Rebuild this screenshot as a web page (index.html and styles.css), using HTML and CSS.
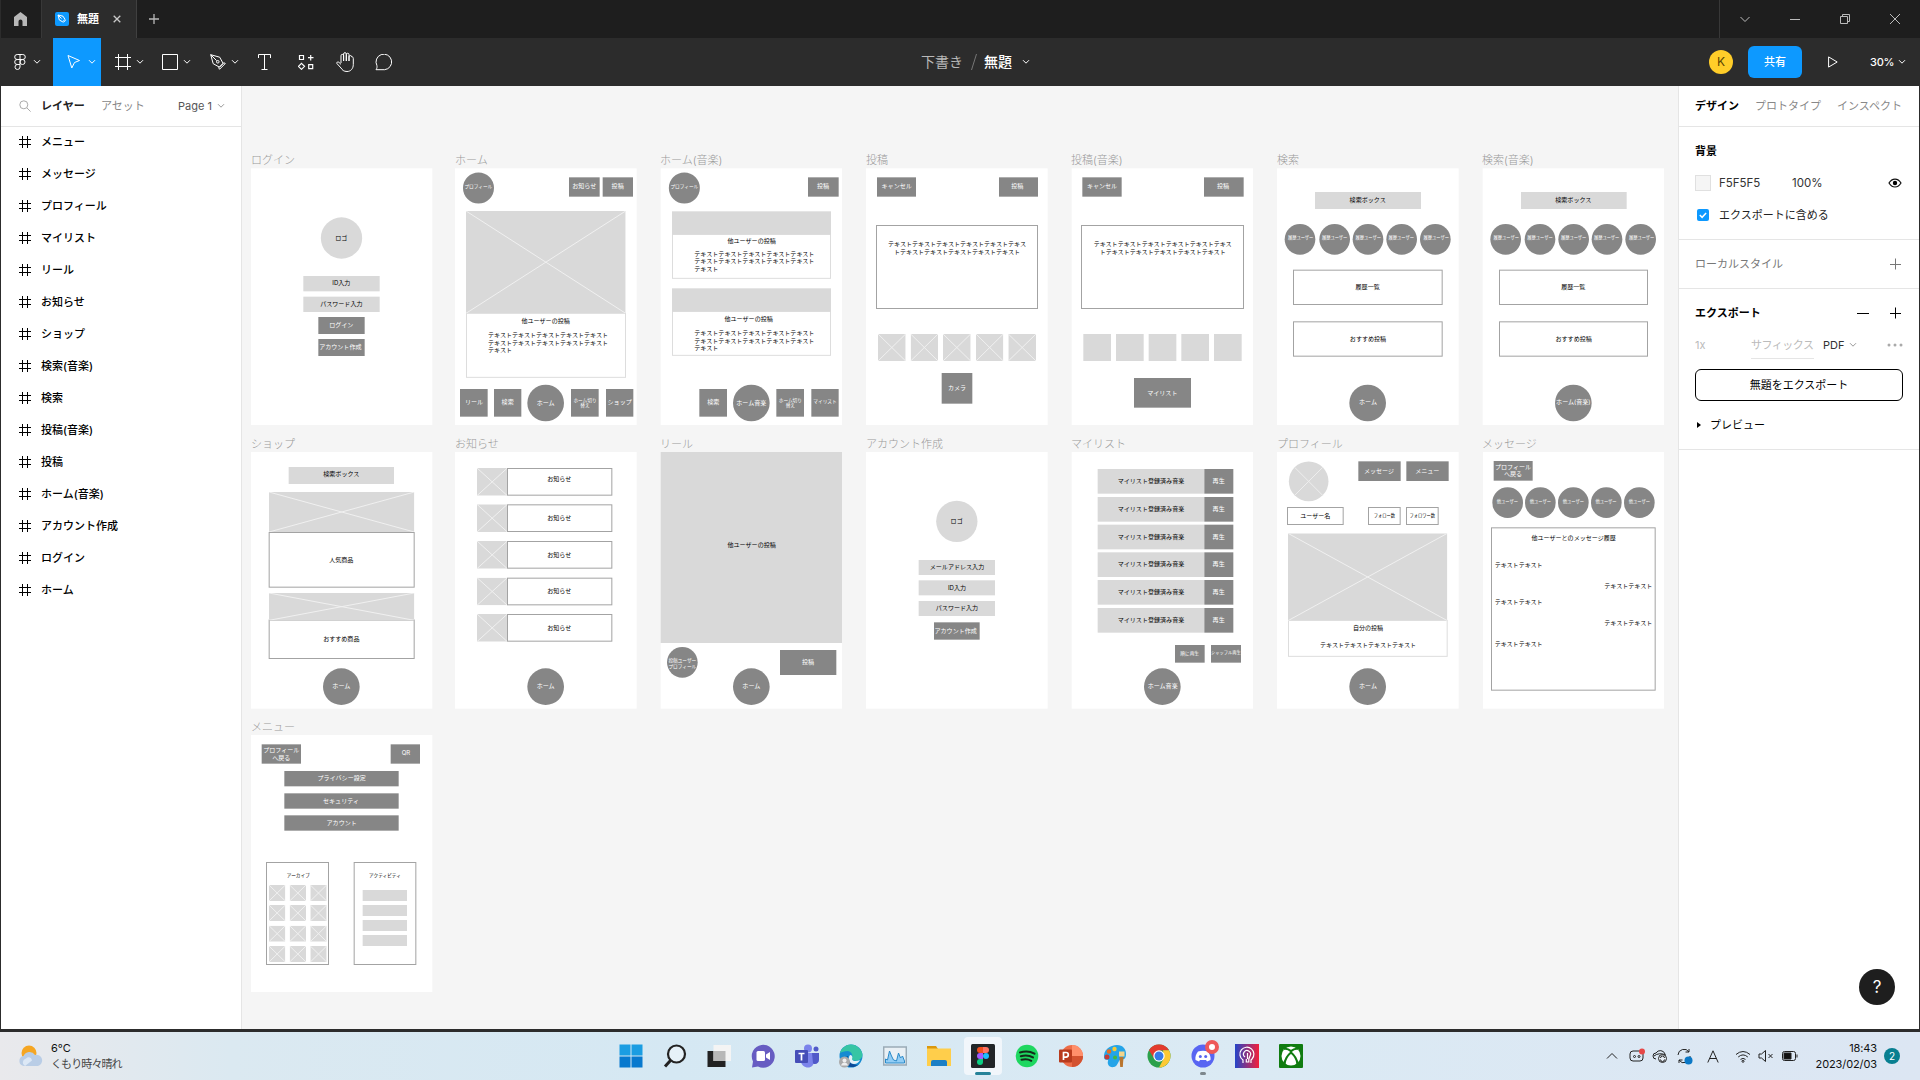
FILE: index.html
```html
<!DOCTYPE html>
<html lang="ja">
<head>
<meta charset="utf-8">
<title>無題</title>
<link rel="stylesheet" href="styles.css">
</head>
<body>
<svg class="defs" width="0" height="0">
  <symbol id="ph" viewBox="0 0 100 100" preserveAspectRatio="none"><rect class="l" width="100" height="100"/><path class="cross" d="M0 0L100 100M100 0L0 100"/></symbol>
  <symbol id="caret" viewBox="0 0 8 6"><path d="M1 1.200l3 3 3-3" fill="none" stroke="currentColor"/></symbol>
  <symbol id="hash" viewBox="0 0 12 12"><path d="M3.500 0v12M8.500 0v12M0 3.500h12M0 8.500h12" fill="none" stroke="currentColor"/></symbol>
  <symbol id="plus" viewBox="0 0 12 12"><path d="M6.500 .5v11M1 6.500h11" fill="none" stroke="currentColor"/></symbol>
</svg>

<header class="tabbar">
  <div class="home"><svg width="13" height="14" viewBox="0 0 13 14"><path d="M6.500 0L13 5v9H8.500V9.500a2 2 0 0 0-4 0V14H0V5z" fill="#b8b8b8"/></svg></div>
  <div class="tab">
    <svg width="14" height="14" viewBox="0 0 14 14"><rect width="14" height="14" rx="2" fill="#0d99ff"/><path d="M3 3l5 1.200 2 3.200-2.400 2.400L4.300 8zM3 3l3.500 3.500M8.300 10.500l2.300-2.300" fill="none" stroke="#fff"/></svg>
    <b>無題</b>
    <svg width="8" height="8" viewBox="0 0 8 8"><path d="M.7.7l6.600 6.600M7.300.7L.7 7.300" stroke="#c8c8c8" stroke-width="1.300"/></svg>
  </div>
  <svg class="newtab" width="10" height="10" viewBox="0 0 10 10"><path d="M5 0v10M0 5h10" stroke="#b8b8b8" stroke-width="1.300"/></svg>
  <div class="winctl">
    <svg width="10" height="10" viewBox="0 0 10 10"><path d="M.5 3L5 7.500 9.500 3"/></svg>
    <svg width="10" height="10" viewBox="0 0 10 10"><path d="M0 5.500h10"/></svg>
    <svg width="10" height="10" viewBox="0 0 10 10"><path d="M.5 2.500h7v7h-7zM2.500 2.500v-2h7v7h-2"/></svg>
    <svg width="10" height="10" viewBox="0 0 10 10"><path d="M0 0l10 10M10 0L0 10"/></svg>
  </div>
</header>

<nav class="toolbar">
  <div class="tools">
    <span class="tool t-menu"><svg width="12" height="16" viewBox="0 0 12 16"><path d="M6 .5H3.200a2.500 2.500 0 0 0 0 5H6zM6 .5h2.800a2.500 2.500 0 0 1 0 5H6M6 5.500H3.200a2.500 2.500 0 0 0 0 5H6zM6 10.500H3.200A2.500 2.500 0 1 0 6 13zM8.600 5.500a2.500 2.500 0 1 1-2.600 2.500 2.500 2.500 0 0 1 2.600-2.500z"/></svg><svg class="car" width="8" height="6"><use href="#caret"/></svg></span>
    <span class="tool t-move on"><svg width="14" height="16" viewBox="0 0 14 16"><path d="M1 1.500l11.500 5-5 2L4.800 14z"/></svg><svg class="car" width="8" height="6"><use href="#caret"/></svg></span>
    <span class="tool"><svg width="16" height="16" viewBox="0 0 16 16"><path d="M3.500 0v16M12.500 0v16M0 3.500h16M0 12.500h16"/></svg><svg class="car" width="8" height="6"><use href="#caret"/></svg></span>
    <span class="tool"><svg width="16" height="16" viewBox="0 0 16 16"><path d="M.5.5h15v15H.5z"/></svg><svg class="car" width="8" height="6"><use href="#caret"/></svg></span>
    <span class="tool"><svg width="16" height="16" viewBox="0 0 16 16"><path d="M.7.7l9 2.500 3.500 6.300-3.700 3.700-6.300-3.500zM.7.7l6 6M9.500 15.300l5.800-5.800-1.600-.8-5 5z"/><circle cx="7.800" cy="7.800" r="1.300"/></svg><svg class="car" width="8" height="6"><use href="#caret"/></svg></span>
    <span class="tool one"><svg width="13" height="16" viewBox="0 0 13 16"><path d="M.5 4V.5h12V4M6.500.5v15M3.500 15.500h6"/></svg></span>
    <span class="tool one"><svg width="16" height="16" viewBox="0 0 16 16"><path d="M1.500 1.500h4v4h-4zM10.700 10.700h4v4h-4zM12.700 1v5.500M10 3.700h5.500M3.500 9.300l3 3-3 3-3-3z" stroke-width="1.200"/></svg></span>
    <span class="tool one hand"><svg width="18" height="20" viewBox="0 0 18 20"><path d="M5 11V3.700a1.300 1.300 0 0 1 2.600 0V9M7.600 9V2a1.300 1.300 0 0 1 2.700 0v7M10.300 9V2.600a1.300 1.300 0 0 1 2.700 0V9M13 9V5a1.300 1.300 0 0 1 2.700-.2c1.200 0 1.600.7 1.600 1.700v6c0 4-2.500 7-6.300 7-3.300 0-4.700-1.400-6-3.500L.9 11.500c-.6-1.100.9-2.200 2-1.200L5 12.400"/></svg></span>
    <span class="tool one"><svg width="18" height="17" viewBox="0 0 18 17"><path d="M1 15.700c1-1.400 1.200-2.600.9-4.200A7.800 7.800 0 1 1 9.600 15.700z"/></svg></span>
  </div>
  <div class="crumb"><span>下書き</span><svg width="6" height="16" viewBox="0 0 6 16"><path d="M5.500 0l-5 16" stroke="#777"/></svg><strong>無題</strong><svg width="8" height="6"><use href="#caret"/></svg></div>
  <div class="actions"><span class="avatar">K</span><span class="share">共有</span><svg class="play" width="10" height="12" viewBox="0 0 10 12"><path d="M.6.900v10.200L9.200 6z" fill="none" stroke="#fff"/></svg><span class="zoom">30%</span><svg width="8" height="6"><use href="#caret"/></svg></div>
</nav>

<main class="work">
  <aside class="layers">
    <div class="lhead"><svg width="12" height="12" viewBox="0 0 12 12"><circle cx="4.800" cy="4.800" r="4" fill="none" stroke="#aaa"/><path d="M7.800 7.800l3.800 3.800" stroke="#aaa"/></svg><b>レイヤー</b><span>アセット</span><em>Page 1</em><svg class="pcar" width="8" height="6"><use href="#caret"/></svg></div>
    <ul>
      <li><svg><use href="#hash"/></svg>メニュー</li>
      <li><svg><use href="#hash"/></svg>メッセージ</li>
      <li><svg><use href="#hash"/></svg>プロフィール</li>
      <li><svg><use href="#hash"/></svg>マイリスト</li>
      <li><svg><use href="#hash"/></svg>リール</li>
      <li><svg><use href="#hash"/></svg>お知らせ</li>
      <li><svg><use href="#hash"/></svg>ショップ</li>
      <li><svg><use href="#hash"/></svg>検索(音楽)</li>
      <li><svg><use href="#hash"/></svg>検索</li>
      <li><svg><use href="#hash"/></svg>投稿(音楽)</li>
      <li><svg><use href="#hash"/></svg>投稿</li>
      <li><svg><use href="#hash"/></svg>ホーム(音楽)</li>
      <li><svg><use href="#hash"/></svg>アカウント作成</li>
      <li><svg><use href="#hash"/></svg>ログイン</li>
      <li><svg><use href="#hash"/></svg>ホーム</li>
    </ul>
  </aside>

  <section class="canvas">
    <article class="board c1 r1"><h2>ログイン</h2>
      <svg viewBox="33 69 546 774"><rect class="w" x="33" y="70" width="544" height="770"/>
        <circle class="l" cx="304.500" cy="279" r="62"/><text x="304" y="279">ロゴ</text>
        <rect class="l" x="190" y="393" width="229" height="46"/><text x="304" y="416">ID入力</text>
        <rect class="l" x="190" y="455" width="229" height="46"/><text x="304" y="478">パスワード入力</text>
        <rect class="d" x="235" y="516" width="139" height="51"/><text class="t" x="304" y="542">ログイン</text>
        <rect class="d" x="235" y="582" width="139" height="51"/><text class="t" x="301" y="608">アカウント作成</text>
      </svg></article>

    <article class="board c2 r1"><h2>ホーム</h2>
      <svg viewBox="645 69 546 774"><rect class="w" x="645" y="70" width="545" height="770"/>
        <circle class="d" cx="715.500" cy="129" r="46.500"/><text class="t s14" x="715" y="125">プロフィール</text>
        <rect class="d" x="987" y="97" width="92" height="58"/><text class="t" x="1033" y="125">お知らせ</text>
        <rect class="d" x="1088" y="97" width="91" height="58"/><text class="t" x="1133" y="125">投稿</text>
        <rect class="f" x="679.500" y="505" width="477" height="192"/>
        <use href="#ph" x="678" y="198" width="479" height="307"/>
        <text x="917" y="528">他ユーザーの投稿</text>
        <text class="st" x="744" y="572">テキストテキストテキストテキストテキスト</text><text class="st" x="744" y="594">テキストテキストテキストテキストテキスト</text><text class="st" x="744" y="616">テキスト</text>
        <rect class="d" x="660" y="732" width="83" height="83"/><text class="t" x="702" y="772">リール</text>
        <rect class="d" x="762" y="732" width="82" height="83"/><text class="t" x="803" y="772">検索</text>
        <circle class="d" cx="917" cy="774" r="55"/><text class="t" x="917" y="774">ホーム</text>
        <rect class="d" x="993" y="732" width="83" height="83"/><text class="t s14" x="1035" y="766">ホーム切り</text><text class="t s14" x="1035" y="783">替え</text>
        <rect class="d" x="1098" y="732" width="82" height="83"/><text class="t" x="1139" y="772">ショップ</text>
      </svg></article>

    <article class="board c3 r1"><h2>ホーム(音楽)</h2>
      <svg viewBox="30 69 546 774"><rect class="w" x="32" y="70" width="544" height="770"/>
        <circle class="d" cx="103" cy="129" r="46.500"/><text class="t s14" x="103" y="125">プロフィール</text>
        <rect class="d" x="474" y="97" width="92" height="58"/><text class="t" x="519" y="125">投稿</text>
        <rect class="f" x="67.500" y="268" width="474" height="132"/><rect class="l" x="66" y="199" width="477" height="70"/>
        <text x="305" y="290">他ユーザーの投稿</text>
        <text class="st" x="133" y="328">テキストテキストテキストテキストテキスト</text><text class="st" x="133" y="350">テキストテキストテキストテキストテキスト</text><text class="st" x="133" y="372">テキスト</text>
        <rect class="f" x="67.500" y="499" width="474" height="132"/><rect class="l" x="66" y="430" width="477" height="70"/>
        <text x="296" y="522">他ユーザーの投稿</text>
        <text class="st" x="133" y="566">テキストテキストテキストテキストテキスト</text><text class="st" x="133" y="588">テキストテキストテキストテキストテキスト</text><text class="st" x="133" y="610">テキスト</text>
        <rect class="d" x="148" y="732" width="83" height="83"/><text class="t" x="190" y="772">検索</text>
        <circle class="d" cx="304" cy="774" r="55"/><text class="t" x="304" y="774">ホーム音楽</text>
        <rect class="d" x="379" y="732" width="83" height="83"/><text class="t s14" x="421" y="766">ホーム切り</text><text class="t s14" x="421" y="783">替え</text>
        <rect class="d" x="484" y="732" width="82" height="83"/><text class="t s14" x="525" y="771">マイリスト</text>
      </svg></article>

    <article class="board c4 r1"><h2>投稿</h2>
      <svg viewBox="648 69 546 774"><rect class="w" x="648" y="70" width="545" height="770"/>
        <rect class="d" x="681" y="97" width="117" height="58"/><text class="t" x="740" y="125">キャンセル</text>
        <rect class="d" x="1047" y="97" width="117" height="58"/><text class="t" x="1102" y="125">投稿</text>
        <rect class="o" x="679.500" y="241.500" width="483" height="249"/>
        <text x="921" y="299">テキストテキストテキストテキストテキストテキス</text><text x="921" y="321">トテキストテキストテキストテキストテキスト</text>
        <use href="#ph" x="684" y="567" width="83" height="81"/><use href="#ph" x="782" y="567" width="82" height="81"/><use href="#ph" x="879" y="567" width="83" height="81"/><use href="#ph" x="978" y="567" width="82" height="81"/><use href="#ph" x="1075" y="567" width="83" height="81"/>
        <rect class="d" x="875" y="684" width="92" height="92"/><text class="t" x="921" y="731">カメラ</text>
      </svg></article>

    <article class="board c5 r1"><h2>投稿(音楽)</h2>
      <svg viewBox="33 69 546 774"><rect class="w" x="35" y="70" width="544" height="770"/>
        <rect class="d" x="67" y="97" width="118" height="58"/><text class="t" x="126" y="125">キャンセル</text>
        <rect class="d" x="432" y="97" width="119" height="58"/><text class="t" x="489" y="125">投稿</text>
        <rect class="o" x="64.500" y="241.500" width="486" height="249"/>
        <text x="308" y="299">テキストテキストテキストテキストテキストテキス</text><text x="308" y="321">トテキストテキストテキストテキストテキスト</text>
        <rect class="l" x="70" y="567" width="83" height="81"/><rect class="l" x="168" y="567" width="83" height="81"/><rect class="l" x="266" y="567" width="83" height="81"/><rect class="l" x="364" y="567" width="83" height="81"/><rect class="l" x="462" y="567" width="83" height="81"/>
        <rect class="d" x="222" y="699" width="171" height="89"/><text class="t" x="307" y="744">マイリスト</text>
      </svg></article>

    <article class="board c6 r1"><h2>検索</h2>
      <svg viewBox="651 69 546 774"><rect class="w" x="651" y="70" width="545" height="770"/>
        <rect class="l" x="765" y="141" width="318" height="51"/><text x="923" y="167">検索ボックス</text>
        <circle class="d" cx="720" cy="283" r="46"/><circle class="d" cx="824" cy="283" r="46"/><circle class="d" cx="924" cy="283" r="46"/><circle class="d" cx="1025" cy="283" r="46"/><circle class="d" cx="1126" cy="283" r="46"/>
        <text class="t s13" x="722" y="279">履歴ユーザー</text><text class="t s13" x="824" y="279">履歴ユーザー</text><text class="t s13" x="925" y="279">履歴ユーザー</text><text class="t s13" x="1024" y="279">履歴ユーザー</text><text class="t s13" x="1129" y="279">履歴ユーザー</text>
        <rect class="o" x="700.500" y="375.500" width="446" height="103"/><text x="923" y="428">履歴一覧</text>
        <rect class="o" x="700.500" y="530.500" width="446" height="103"/><text x="924" y="583">おすすめ投稿</text>
        <circle class="d" cx="923" cy="774" r="55"/><text class="t" x="924" y="771">ホーム</text>
      </svg></article>

    <article class="board c7 r1"><h2>検索(音楽)</h2>
      <svg viewBox="66 69 546 774"><rect class="w" x="68" y="70" width="544" height="770"/>
        <rect class="l" x="183" y="141" width="317" height="51"/><text x="340" y="167">検索ボックス</text>
        <circle class="d" cx="137" cy="283" r="46"/><circle class="d" cx="240" cy="283" r="46"/><circle class="d" cx="341" cy="283" r="46"/><circle class="d" cx="441" cy="283" r="46"/><circle class="d" cx="542" cy="283" r="46"/>
        <text class="t s13" x="139" y="279">履歴ユーザー</text><text class="t s13" x="240" y="279">履歴ユーザー</text><text class="t s13" x="341" y="279">履歴ユーザー</text><text class="t s13" x="440" y="279">履歴ユーザー</text><text class="t s13" x="545" y="279">履歴ユーザー</text>
        <rect class="o" x="118.500" y="375.500" width="444" height="103"/><text x="340" y="428">履歴一覧</text>
        <rect class="o" x="118.500" y="530.500" width="444" height="103"/><text x="341" y="583">おすすめ投稿</text>
        <circle class="d" cx="340" cy="774" r="55"/><text class="t" x="340" y="771">ホーム(音楽)</text>
      </svg></article>

    <article class="board c1 r2"><h2>ショップ</h2>
      <svg viewBox="33 66 546 774"><rect class="w" x="33" y="66" width="544" height="770"/>
        <rect class="l" x="146" y="111" width="316" height="51"/><text x="304" y="132">検索ボックス</text>
        <rect class="o" x="87.500" y="307.500" width="435" height="164"/><use href="#ph" x="87" y="186" width="436" height="120"/><text x="304" y="390">人気商品</text>
        <rect class="o" x="87.500" y="570" width="435" height="115.500"/><use href="#ph" x="87" y="489" width="436" height="82"/><text x="304" y="628">おすすめ商品</text>
        <circle class="d" cx="304" cy="770" r="55"/><text class="t" x="304" y="770">ホーム</text>
      </svg></article>

    <article class="board c2 r2"><h2>お知らせ</h2>
      <svg viewBox="645 66 546 774"><rect class="w" x="645" y="66" width="545" height="770"/>
        <use href="#ph" x="711" y="114" width="91" height="83"/><rect class="o" x="802.500" y="115.500" width="313" height="80"/><text x="958" y="149">お知らせ</text>
        <use href="#ph" x="711" y="223" width="91" height="83"/><rect class="o" x="802.500" y="224.500" width="313" height="80"/><text x="958" y="265">お知らせ</text>
        <use href="#ph" x="711" y="333" width="91" height="83"/><rect class="o" x="802.500" y="334.500" width="313" height="80"/><text x="958" y="375">お知らせ</text>
        <use href="#ph" x="711" y="443" width="91" height="83"/><rect class="o" x="802.500" y="444.500" width="313" height="80"/><text x="958" y="485">お知らせ</text>
        <use href="#ph" x="711" y="552" width="91" height="83"/><rect class="o" x="802.500" y="553.500" width="313" height="80"/><text x="958" y="594">お知らせ</text>
        <circle class="d" cx="917" cy="770" r="55"/><text class="t" x="917" y="770">ホーム</text>
      </svg></article>

    <article class="board c3 r2"><h2>リール</h2>
      <svg viewBox="30 66 546 774"><rect class="w" x="32" y="66" width="544" height="770"/>
        <rect class="l" x="32" y="66" width="544" height="573"/><text x="305" y="346">他ユーザーの投稿</text>
        <circle class="d" cx="97" cy="697" r="46"/><text class="t s14" x="97" y="693">投稿ユーザー</text><text class="t s14" x="97" y="710">プロフィール</text>
        <rect class="d" x="390" y="660" width="169" height="75"/><text class="t" x="474" y="696">投稿</text>
        <circle class="d" cx="304" cy="770" r="55"/><text class="t" x="304" y="770">ホーム</text>
      </svg></article>

    <article class="board c4 r2"><h2>アカウント作成</h2>
      <svg viewBox="648 66 546 774"><rect class="w" x="648" y="66" width="545" height="770"/>
        <circle class="l" cx="920.500" cy="274" r="62"/><text x="920" y="275">ロゴ</text>
        <rect class="l" x="806" y="390" width="229" height="45"/><text x="921" y="412">メールアドレス入力</text>
        <rect class="l" x="806" y="451" width="229" height="45"/><text x="921" y="474">ID入力</text>
        <rect class="l" x="806" y="513" width="229" height="45"/><text x="921" y="535">パスワード入力</text>
        <rect class="d" x="852" y="577" width="137" height="52"/><text class="t" x="917" y="604">アカウント作成</text>
      </svg></article>

    <article class="board c5 r2"><h2>マイリスト</h2>
      <svg viewBox="33 66 546 774"><rect class="w" x="35" y="66" width="544" height="770"/>
        <rect class="l" x="113" y="117" width="320" height="74"/><rect class="d" x="433" y="117" width="87" height="74"/><text x="273" y="154">マイリスト登録済み音楽</text><text class="t" x="476" y="154">再生</text>
        <rect class="l" x="113" y="201" width="320" height="74"/><rect class="d" x="433" y="201" width="87" height="74"/><text x="273" y="238">マイリスト登録済み音楽</text><text class="t" x="476" y="238">再生</text>
        <rect class="l" x="113" y="284" width="320" height="74"/><rect class="d" x="433" y="284" width="87" height="74"/><text x="273" y="321">マイリスト登録済み音楽</text><text class="t" x="476" y="321">再生</text>
        <rect class="l" x="113" y="367" width="320" height="74"/><rect class="d" x="433" y="367" width="87" height="74"/><text x="273" y="404">マイリスト登録済み音楽</text><text class="t" x="476" y="404">再生</text>
        <rect class="l" x="113" y="450" width="320" height="74"/><rect class="d" x="433" y="450" width="87" height="74"/><text x="273" y="487">マイリスト登録済み音楽</text><text class="t" x="476" y="487">再生</text>
        <rect class="l" x="113" y="534" width="320" height="74"/><rect class="d" x="433" y="534" width="87" height="74"/><text x="273" y="571">マイリスト登録済み音楽</text><text class="t" x="476" y="571">再生</text>
        <rect class="d" x="345" y="645" width="89" height="53"/><text class="t s14" x="389" y="671">順に再生</text>
        <rect class="d" x="453" y="645" width="90" height="53"/><text class="t s13" x="498" y="671">シャッフル再生</text>
        <circle class="d" cx="307" cy="770" r="55"/><text class="t" x="308" y="770">ホーム音楽</text>
      </svg></article>

    <article class="board c6 r2"><h2>プロフィール</h2>
      <svg viewBox="651 66 546 774"><rect class="w" x="651" y="66" width="545" height="770"/>
        <circle class="l" cx="746" cy="154" r="59.500"/><path class="line" d="M704 112l84 84M788 112l-84 84"/>
        <rect class="d" x="895" y="94" width="127" height="59"/><text class="t" x="957" y="124">メッセージ</text>
        <rect class="d" x="1039" y="94" width="127" height="59"/><text class="t" x="1102" y="124">メニュー</text>
        <rect class="o" x="682.500" y="232.500" width="167" height="51"/><text x="766" y="259">ユーザー名</text>
        <rect class="o" x="925.500" y="232.500" width="95" height="51"/><text class="s13" x="973" y="258">フォロー数</text>
        <rect class="o" x="1039.500" y="232.500" width="95" height="51"/><text class="s13" x="1087" y="258">フォロワー数</text>
        <rect class="f" x="685.500" y="571" width="476" height="108"/><use href="#ph" x="684" y="310" width="478" height="262"/>
        <text x="924" y="595">自分の投稿</text><text x="924" y="647">テキストテキストテキストテキスト</text>
        <circle class="d" cx="923" cy="770" r="55"/><text class="t" x="924" y="770">ホーム</text>
      </svg></article>

    <article class="board c7 r2"><h2>メッセージ</h2>
      <svg viewBox="1266 66 546 774"><rect class="w" x="1269" y="66" width="543" height="770"/>
        <rect class="d" x="1301" y="93" width="117" height="59"/><text class="t" x="1359" y="111">プロフィール</text><text class="t" x="1359" y="134">へ戻る</text>
        <circle class="d" cx="1343" cy="218" r="46"/><circle class="d" cx="1441" cy="218" r="46"/><circle class="d" cx="1540" cy="218" r="46"/><circle class="d" cx="1639" cy="218" r="46"/><circle class="d" cx="1738" cy="218" r="46"/>
        <text class="t s13" x="1342" y="218">他ユーザー</text><text class="t s13" x="1441" y="218">他ユーザー</text><text class="t s13" x="1540" y="218">他ユーザー</text><text class="t s13" x="1638" y="218">他ユーザー</text><text class="t s13" x="1738" y="218">他ユーザー</text>
        <rect class="o" x="1294.500" y="293.500" width="491" height="487"/>
        <text x="1541" y="325">他ユーザーとのメッセージ履歴</text>
        <text class="st" x="1304" y="407">テキストテキスト</text><text class="en" x="1777" y="469">テキストテキスト</text><text class="st" x="1304" y="518">テキストテキスト</text><text class="en" x="1777" y="580">テキストテキスト</text><text class="st" x="1304" y="642">テキストテキスト</text>
      </svg></article>

    <article class="board c1 r3"><h2>メニュー</h2>
      <svg viewBox="33 60 546 774"><rect class="w" x="33" y="60" width="544" height="771"/>
        <rect class="d" x="65" y="88" width="118" height="58"/><text class="t" x="124" y="107">プロフィール</text><text class="t" x="124" y="129">へ戻る</text>
        <rect class="d" x="452" y="88" width="88" height="58"/><text class="t" x="498" y="115">QR</text>
        <rect class="d" x="133" y="168" width="343" height="46"/><text class="t" x="305" y="191">プライバシー設定</text>
        <rect class="d" x="133" y="235" width="343" height="46"/><text class="t" x="303" y="258">セキュリティ</text>
        <rect class="d" x="133" y="301" width="343" height="46"/><text class="t" x="305" y="324">アカウント</text>
        <rect class="o" x="79.500" y="442.500" width="186" height="306"/><text class="s14" x="175" y="481">アーカイブ</text>
        <use href="#ph" x="87" y="510" width="49" height="48"/><use href="#ph" x="149" y="510" width="49" height="48"/><use href="#ph" x="211" y="510" width="49" height="48"/>
        <use href="#ph" x="87" y="570" width="49" height="48"/><use href="#ph" x="149" y="570" width="49" height="48"/><use href="#ph" x="211" y="570" width="49" height="48"/>
        <use href="#ph" x="87" y="632" width="49" height="48"/><use href="#ph" x="149" y="632" width="49" height="48"/><use href="#ph" x="211" y="632" width="49" height="48"/>
        <use href="#ph" x="87" y="693" width="49" height="48"/><use href="#ph" x="149" y="693" width="49" height="48"/><use href="#ph" x="211" y="693" width="49" height="48"/>
        <rect class="o" x="342.500" y="442.500" width="185" height="306"/><text class="s14" x="435" y="481">アクティビティ</text>
        <rect class="l" x="368" y="525" width="133" height="33"/><rect class="l" x="368" y="570" width="133" height="33"/><rect class="l" x="368" y="615" width="133" height="33"/><rect class="l" x="368" y="660" width="133" height="33"/>
      </svg></article>
  </section>

  <aside class="props">
    <div class="ptabs"><b>デザイン</b><span>プロトタイプ</span><span>インスペクト</span></div>
    <section class="bg">
      <h3>背景</h3>
      <div class="prow"><i class="swatch"></i><span class="hex">F5F5F5</span><span class="pct">100%</span><svg class="end" width="14" height="10" viewBox="0 0 14 10"><path d="M1 5c3-5.300 9-5.300 12 0-3 5.300-9 5.300-12 0z" fill="none" stroke="#111" stroke-width="1.200"/><circle cx="7" cy="5" r="2.200"/></svg></div>
      <div class="prow"><svg class="check" width="12" height="12" viewBox="0 0 12 12"><rect width="12" height="12" rx="2" fill="#0d99ff"/><path d="M2.800 6l2.300 2.300 4-4.300" fill="none" stroke="#fff" stroke-width="1.500"/></svg><span class="inc">エクスポートに含める</span></div>
    </section>
    <section class="styles"><span>ローカルスタイル</span><svg class="end" width="12" height="12"><use href="#plus"/></svg></section>
    <section class="export">
      <div class="prow"><b>エクスポート</b><svg class="end minus" width="12" height="12" viewBox="0 0 12 12"><path d="M0 6.500h12" stroke="#000"/></svg><svg width="12" height="12"><use href="#plus"/></svg></div>
      <div class="prow opts"><span class="one-x">1x</span><span class="suffix">サフィックス</span><span class="pdf">PDF</span><svg class="ecar" width="8" height="6"><use href="#caret"/></svg><svg class="end" width="16" height="4" viewBox="0 0 16 4"><g fill="#aaa"><circle cx="2" cy="2" r="1.500"/><circle cx="8" cy="2" r="1.500"/><circle cx="14" cy="2" r="1.500"/></g></svg></div>
      <button class="exp">無題をエクスポート</button>
      <div class="prow prev"><svg width="4" height="6" viewBox="0 0 4 6"><path d="M0 0l4 3-4 3z"/></svg><span>プレビュー</span></div>
    </section>
    <button class="help">?</button>
  </aside>
</main>

<footer class="taskbar">
  <div class="weather">
    <svg width="26" height="24" viewBox="0 0 26 24"><circle cx="11" cy="9" r="7.500" fill="#f5a623"/><path d="M6 22a5 5 0 0 1-.5-9.900A6.500 6.500 0 0 1 17 11a5.600 5.600 0 0 1 3 11z" fill="#b9cde6"/><path d="M7 22a4 4 0 0 1 1-7.500c3-3 6 0 6 2" fill="#dce8f6"/></svg>
    <p><span>6°C</span><span class="wt">くもり時々晴れ</span></p>
  </div>
  <div class="apps">
    <span><svg viewBox="0 0 24 24"><path fill="#1b9de2" d="M.5.5h11v11H.5zM12.500.5h11v11h-11z"/><path fill="#0879ce" d="M.5 12.500h11v11H.5zM12.500 12.500h11v11h-11z"/></svg></span>
    <span><svg viewBox="0 0 24 24"><circle cx="13.500" cy="10" r="8.500" fill="#e6f1f8" stroke="#222" stroke-width="2.200"/><path d="M7.500 16.500L2 22.500" stroke="#222" stroke-width="3"/></svg></span>
    <span><svg viewBox="0 0 24 24"><path fill="#222" d="M.5 7h18v16H.5z"/><path fill="#f4f4f4" d="M6.500 1H24v16H6.500z"/><path fill="#b8b8b8" d="M6.500 7h12v10h-12z"/></svg></span>
    <span><svg viewBox="0 0 24 24"><path d="M1 23.500l1-6A11.500 11.500 0 1 1 7 22.500z" fill="#675cc2"/><rect x="5.500" y="7" width="8.500" height="10" rx="1.500" fill="#fff"/><path d="M15 10.500l4-2.500v8l-4-2.500z" fill="#fff"/></svg></span>
    <span><svg viewBox="0 0 24 24"><circle cx="13" cy="4.500" r="4" fill="#7b83eb"/><circle cx="21" cy="5" r="2.500" fill="#5059c9"/><path d="M6 9h13v8c0 4-2.500 6.500-6 6.500S6 21 6 17z" fill="#7b83eb"/><path d="M17 9h7v7c0 3-3 5-6 3.500z" fill="#5059c9"/><rect y="6" width="13" height="13" rx="1" fill="#464eb8"/><path d="M3.500 9.500h6M6.500 9.500v7" stroke="#fff" stroke-width="1.700"/></svg></span>
    <span><svg viewBox="0 0 24 24"><circle cx="12" cy="12" r="11.500" fill="#168bd1"/><path d="M1 9C4 0 14-2 20 4c5 5 4 10 0 12-3 1.300-7 .5-7-1 1-4 0-7-4-8-4 0-6 1-8 2z" fill="#36c5a4"/><path d="M9 12c-1 5 4 9 10 9-4 3-11 3-13-2-1-3 0-6 3-7z" fill="#0c4a98"/><path d="M11 11c2 0 3 2 2 4 0 2 4 3 8 1-1 2-3 4-6 4-4 0-7-5-4-9z" fill="#e3f1f8"/><circle cx="5.500" cy="18" r="5.500" fill="#aaa"/><circle cx="5.500" cy="16.500" r="2" fill="#eee"/><path d="M2 21.500c1-4 6-4 7 0z" fill="#eee"/></svg></span>
    <span><svg viewBox="0 0 24 24"><rect x=".7" y="3" width="22.600" height="18" fill="#e9f0f5" stroke="#9aabb7" stroke-width="1.500"/><path d="M2.500 19v-4l2 1 2-9 2 5 2 4 3 1 2-8 2 5 2-2 2 5v2z" fill="#92cdf5" stroke="#2a8ac9"/></svg></span>
    <span><svg viewBox="0 0 24 24"><path d="M0 2h9l2 3h-11z" fill="#db980d"/><path d="M0 4.500h24V22H0z" fill="#ffce4b"/><path d="M4 22v-4q0-2 2-2h12q2 0 2 2v4z" fill="#1c7fc5"/></svg></span>
    <span class="active"><svg viewBox="0 0 24 24"><rect width="24" height="24" rx="1.500" fill="#222528"/><path d="M12 3H9a3 3 0 0 0 0 6h3z" fill="#f24e1e"/><path d="M12 3h3a3 3 0 0 1 0 6h-3z" fill="#ff7262"/><path d="M12 9H9a3 3 0 0 0 0 6h3z" fill="#a259ff"/><circle cx="15" cy="12" r="3" fill="#1abcfe"/><path d="M12 15H9a3 3 0 1 0 3 3z" fill="#0acf83"/></svg></span>
    <span><svg viewBox="0 0 24 24"><circle cx="12" cy="12" r="11.300" fill="#1ed760"/><path d="M5 8.500q8-2.500 14.500 1.200M5.800 12.200q6.700-2 12.200 1.200M6.500 15.800q5.500-1.500 9.800 1" fill="none" stroke="#152b1b" stroke-width="2" stroke-linecap="round"/></svg></span>
    <span><svg viewBox="0 0 24 24"><circle cx="13" cy="12" r="11" fill="#ed6c47"/><path d="M13 1a11 11 0 0 1 11 11H13z" fill="#ff8f6b"/><path d="M13 23a11 11 0 0 0 11-11H13z" fill="#d35230"/><rect y="5.500" width="13" height="13" rx="1" fill="#b83b1d"/><path d="M4.500 16V8.500H7a2.300 2.300 0 0 1 0 4.600H4.500" fill="none" stroke="#fff" stroke-width="1.700"/></svg></span>
    <span><svg viewBox="0 0 24 24"><path d="M14 1c6 0 9 4 9 9 0 6-3 5-6 6-2 1-2 6-6 7-5 1-7-3-6-6 1-2-3 0-4-3C0 6 7 1 14 1z" fill="#25a4e8"/><circle cx="4" cy="13" r="2.500" fill="#c53b36"/><circle cx="6" cy="7.500" r="2.300" fill="#e76d23"/><circle cx="11.500" cy="5" r="2.200" fill="#f7cb32"/><circle cx="12" cy="13.500" r="2" fill="#46b93a"/><path d="M16.500 13h4l-.7 10h-2.600z" fill="#b9752e"/><path d="M16 7.500h5.500v5H16z" fill="#f4d48a"/></svg></span>
    <span><svg viewBox="0 0 24 24"><circle cx="12" cy="12" r="11.500" fill="#2ca14b"/><path d="M2 6.300A11.500 11.500 0 0 1 22 6.300l-10 .2-5 8z" fill="#e33b2e"/><path d="M22 6.300A11.500 11.500 0 0 1 12 23.500l5-9.500-1-7.700z" fill="#fcc934"/><circle cx="12" cy="12" r="5.700" fill="#fff"/><circle cx="12" cy="12" r="4.500" fill="#367be8"/></svg></span>
    <span class="running"><svg viewBox="0 0 24 24"><circle cx="12" cy="12" r="11.500" fill="#5865f2"/><path d="M7 7.500q5-1.500 10 0c2 3 3 6 2.500 8.500L16 17.500l-1-1.500H9l-1 1.500L4.500 16C4 13 5 10 7 7.500z" fill="#fff"/><circle cx="9.300" cy="12.500" r="1.500" fill="#5865f2"/><circle cx="14.700" cy="12.500" r="1.500" fill="#5865f2"/></svg><i class="alert"></i></span>
    <span><svg viewBox="0 0 24 24"><defs><linearGradient id="ai" x2="1" y2="0"><stop stop-color="#2445c8"/><stop offset="1" stop-color="#f3203b"/></linearGradient></defs><path d="M0 0h24v24H0z" fill="url(#ai)"/><path d="M8 19v-3a7 7 0 1 1 9-1l-1 1v3M10 13a3.500 3.500 0 1 1 5-1l-1.200 3v3h-2.500v-3M12.500 9v6" fill="none" stroke="#fff" stroke-width="1.200"/></svg></span>
    <span><svg viewBox="0 0 24 24"><rect width="24" height="24" rx="1" fill="#107c10"/><circle cx="12" cy="12" r="9.500" fill="#fff"/><path d="M5 5c3-1 5 .5 7 2.200C14 5.500 16 4 19 5M5.500 20C6 15 9 11 12 8.500c3 2.500 6 6.500 6.500 11.500" fill="none" stroke="#107c10" stroke-width="2.200"/></svg></span>
  </div>
  <div class="tray">
    <svg class="up" width="12" height="8" viewBox="0 0 12 8"><path d="M1 6.500l5-5 5 5"/></svg>
    <svg width="16" height="16" viewBox="0 0 16 16"><rect x="1" y="3" width="13" height="10" rx="3"/><circle cx="5.500" cy="8.500" r="1"/><circle cx="10" cy="8.500" r="1"/><circle cx="13" cy="3.500" r="3" fill="#e74848" stroke="none"/></svg>
    <svg width="17" height="16" viewBox="0 0 17 16"><path d="M4 11a3 3 0 0 1 0-6 5 5 0 0 1 9 1M2 8q5-4 12-1"/><circle cx="10.500" cy="10.500" r="4" fill="#e6edf5"/><path d="M8.500 10a2 2 0 0 1 4 0M12.500 11.500a2 2 0 0 1-4 0" stroke="#222"/></svg>
    <svg width="17" height="17" viewBox="0 0 17 17"><path d="M2 7a6 6 0 0 1 11-3V1M13 4h-3.500M14 8a6 6 0 0 1-11 4v3M3 12h3.500"/><circle cx="12.500" cy="12.500" r="4" fill="#0b78c6" stroke="none"/></svg>
    <svg class="ime" width="12" height="13" viewBox="0 0 12 13"><path d="M.8 12.500L6 .8l5.200 11.700M2.600 8.500h6.800"/></svg>
    <svg width="16" height="13" viewBox="0 0 16 13"><path d="M1 4.500q7-6 14 0M3.200 7q4.800-4.200 9.600 0M5.500 9.400q2.500-2 5 0"/><circle cx="8" cy="11.300" r="1"/></svg>
    <svg width="16" height="14" viewBox="0 0 16 14"><path d="M1 5h2.500L7.500 1.500v11L3.500 9H1zM10.500 5l4 4M14.500 5l-4 4"/></svg>
    <svg width="17" height="12" viewBox="0 0 17 12"><rect x="1.500" y="1.500" width="13" height="9" rx="2"/><path d="M3 3h7v6H3z" fill="#111"/><path d="M16 4.500v3"/></svg>
    <p class="clock"><span>18:43</span><span>2023/02/03</span></p>
    <b class="count">2</b>
  </div>
</footer>
</body>
</html>
```
FILE: styles.css
```css
* { box-sizing: border-box; }
body { margin: 0; width: 1920px; height: 1080px; overflow: hidden; display: flex; flex-direction: column; font: 11px/16px Inter, "Noto Sans CJK JP", sans-serif; color: #222; background: #2c2c2c; }
svg { display: block; flex: none; }
.defs { position: absolute; }
h2, h3, p, ul { margin: 0; padding: 0; font-size: 11px; }
button { font: inherit; padding: 0; }

/* window tabs */
.tabbar { height: 38px; flex: none; background: #1e1e1e; display: flex; align-items: center; border-left: 1px solid #2c2c2c; }
.home { width: 41px; height: 38px; display: flex; align-items: center; padding-left: 13px; border-right: 1px solid #383838; }
.tab { width: 95px; height: 38px; background: #2c2c2c; border-right: 1px solid #404040; display: flex; align-items: center; padding-left: 13px; color: #fff; }
.tab b { margin: 0 14px 0 8px; width: 22px; }
.newtab { margin-left: 12px; }
.winctl { margin-left: auto; width: 201px; height: 38px; border-left: 1px solid #383838; display: flex; align-items: center; gap: 40px; padding-left: 20px; fill: none; stroke: #bbb; }

/* toolbar */
.toolbar { height: 48px; flex: none; display: grid; grid-template-columns: 921px 1fr 199px; align-items: center; color: #fff; }
.tools { display: flex; padding-left: 5px; }
.tool { height: 48px; width: 48px; display: flex; align-items: center; padding-left: 14px; fill: none; stroke: #fff; }
.tool .car { margin-left: 5px; stroke: none; }
.tool:nth-child(n+4) { padding-left: 13px; }
.tool:nth-child(3) { padding-left: 14px; }
.tool.t-menu { padding-left: 9px; }
.t-menu .car { margin-left: 7px; }
.on { background: #0d99ff; }
.on .car { margin-left: 7px; }
.tool.one { width: 40px; padding-left: 13px; }
.tool.hand { padding: 0 0 1px 11px; }
.tool.one:last-child { padding-left: 10px; }
.crumb { display: flex; align-items: center; font-size: 14px; color: #b8b8b8; }
.crumb svg:first-of-type { margin: 0 7px 0 8px; }
.crumb strong { font-weight: 500; color: #fff; margin-right: 10px; }
.crumb svg:last-child { color: #fff; }
.actions { justify-self: end; width: 211px; display: flex; align-items: center; }
.avatar { width: 24px; height: 24px; border-radius: 50%; background: #ffcd29; color: #594300; display: grid; place-items: center; font-size: 12px; }
.share { margin-left: 15px; width: 54px; height: 32px; border-radius: 6px; background: #0d99ff; display: grid; place-items: center; font-weight: 500; }
.play { margin-left: 26px; }
.zoom { margin: 0 4px 0 32px; width: 24px; font-size: 11px; font-weight: 500; letter-spacing: -.2px; }

/* work area */
.work { height: 943px; flex: none; display: grid; grid-template-columns: 241px 1436px 241px; padding: 0 1px; background: #2c2c2c; }
.layers { background: #fff; border-right: 1px solid #e5e5e5; }
.lhead { height: 41px; border-bottom: 1px solid #e5e5e5; display: flex; align-items: center; padding-left: 18px; }
.lhead b { margin-left: 10px; width: 44px; }
.lhead span { margin-left: 16px; width: 44px; color: #888; }
.lhead em { margin-left: 33px; font-style: normal; color: #555; width: 35px; }
.pcar { margin-left: 4px; color: #999; }
.layers ul { list-style: none; margin-top: -1px; }
.layers li { height: 32px; display: flex; align-items: center; padding-left: 18px; font-weight: 500; color: #000; }
.layers li svg { width: 12px; height: 12px; margin-right: 10px; }
.canvas { position: relative; background: #f5f5f5; overflow: hidden; }

/* artboards on the free canvas */
.board { position: absolute; width: 182px; }
.board h2 { height: 16px; font-weight: 300; color: #999; white-space: nowrap; }
.board svg { width: 182px; height: 258px; }
.c1 { left: 9px; } .c2 { left: 213px; } .c3 { left: 418px; } .c4 { left: 624px; } .c5 { left: 829px; } .c6 { left: 1035px; } .c7 { left: 1240px; }
.r1 { top: 66px; } .r2 { top: 350px; } .r3 { top: 633px; }
.w { fill: #fff; }
.l { fill: #d9d9d9; }
.d { fill: #868686; }
.o { fill: #fff; stroke: #a3a3a3; stroke-width: 3; }
.f { fill: #fff; stroke: #ddd; stroke-width: 3; }
.cross { stroke: #f0f0f0; stroke-width: 1px; vector-effect: non-scaling-stroke; }
.line { stroke: #eee; stroke-width: 3; }
.board text { font-family: Inter, "Noto Sans CJK JP", sans-serif; font-size: 18.200px; font-weight: 400; fill: #000; text-anchor: middle; dominant-baseline: central; transform: translateY(-2px); }
.board .t { fill: #fff; }
.board .s14 { font-size: 14px; }
.board .s13 { font-size: 12.800px; }
.board .st { text-anchor: start; }
.board .en { text-anchor: end; }

/* design panel */
.props { position: relative; background: #fff; border-left: 1px solid #e5e5e5; }
.help { position: absolute; right: 24px; bottom: 24px; width: 36px; height: 36px; border: 0; border-radius: 50%; background: #1e1e1e; color: #fff; font-size: 17px; }
.ptabs { height: 41px; border-bottom: 1px solid #e5e5e5; display: flex; align-items: center; gap: 16px; padding-left: 16px; color: #888; white-space: nowrap; }
.ptabs b { color: #000; }
.props section { border-bottom: 1px solid #e5e5e5; padding: 0 16px 0 16px; }
.prow { height: 32px; display: flex; align-items: center; }
.end { margin-left: auto; }
.bg { height: 113px; padding-top: 8px !important; }
.bg h3 { height: 32px; line-height: 32px; color: #000; }
.bg .end { margin-right: 1px; }
.swatch { width: 16px; height: 16px; background: #f5f5f5; border: 1px solid #e0e0e0; }
.hex { margin-left: 8px; width: 73px; font-size: 11.500px; color: #333; }
.pct { font-size: 11.500px; color: #333; }
.check { margin-left: 2px; }
.inc { margin-left: 10px; color: #222; }
.styles { height: 49px; display: flex; align-items: center; color: #777; }
.styles .end, .export .prow:first-child svg:last-child { margin-right: 2px; }
.export { height: 161px; padding-top: 8px !important; color: #000; }
.export .minus { margin-right: 20px; }
.opts .one-x { width: 56px; color: #bbb; }
.suffix { width: 63px; height: 28px; line-height: 28px; white-space: nowrap; letter-spacing: -.5px; color: #bbb; border-bottom: 1px solid #e5e5e5; }
.pdf { margin-left: 9px; width: 26px; color: #333; }
.ecar { color: #999; }
.exp { display: block; width: 208px; height: 32px; margin-top: 8px; background: #fff; border: 1px solid #000; border-radius: 6px; color: #000; }
.prev { margin-top: 8px; padding-left: 2px; gap: 9px; }

/* system taskbar */
.taskbar { height: 48px; margin-top: 3px; flex: none; display: grid; grid-template-columns: 609px 704px 1fr; align-items: center; background: linear-gradient(90deg, #e9e9ec 0, #dbe9f1 12%, #d5e8f3 35%, #dbeaf4 65%, #dce6f3 100%); color: #111; font-size: 12px; }
.weather { display: flex; align-items: center; padding-left: 18px; gap: 7px; }
.weather p, .clock { display: flex; flex-direction: column; font-size: 11px; }
.wt { font-size: 11px; letter-spacing: -.9px; color: #444; }
.apps { display: flex; }
.apps > span { width: 38px; height: 38px; margin: 0 3px; border-radius: 4px; display: grid; place-items: center; position: relative; }
.apps svg { width: 24px; height: 24px; }
.apps .active { background: #f1f6fb; }
.active::after, .running::after { content: ""; position: absolute; bottom: 0; left: 11px; width: 16px; height: 3px; border-radius: 2px; background: #268299; }
.running::after { left: 16px; width: 6px; background: #7d878d; }
.alert { position: absolute; right: 3px; top: 3px; width: 14px; height: 14px; border: 4px solid #ee5959; border-radius: 50%; background: #fff; }
.tray { display: flex; align-items: center; gap: 7px; padding-left: 293px; fill: none; stroke: #222; }
.tray .up { margin-right: 4px; }
.tray .ime { margin: 0 9px 0 7px; }
.clock { margin-left: auto; text-align: right; letter-spacing: -.1px; }
.count { width: 16px; height: 16px; border-radius: 50%; background: #087f91; color: #fff; font-size: 10px; text-align: center; margin-right: 20px; font-weight: 400; }
```
